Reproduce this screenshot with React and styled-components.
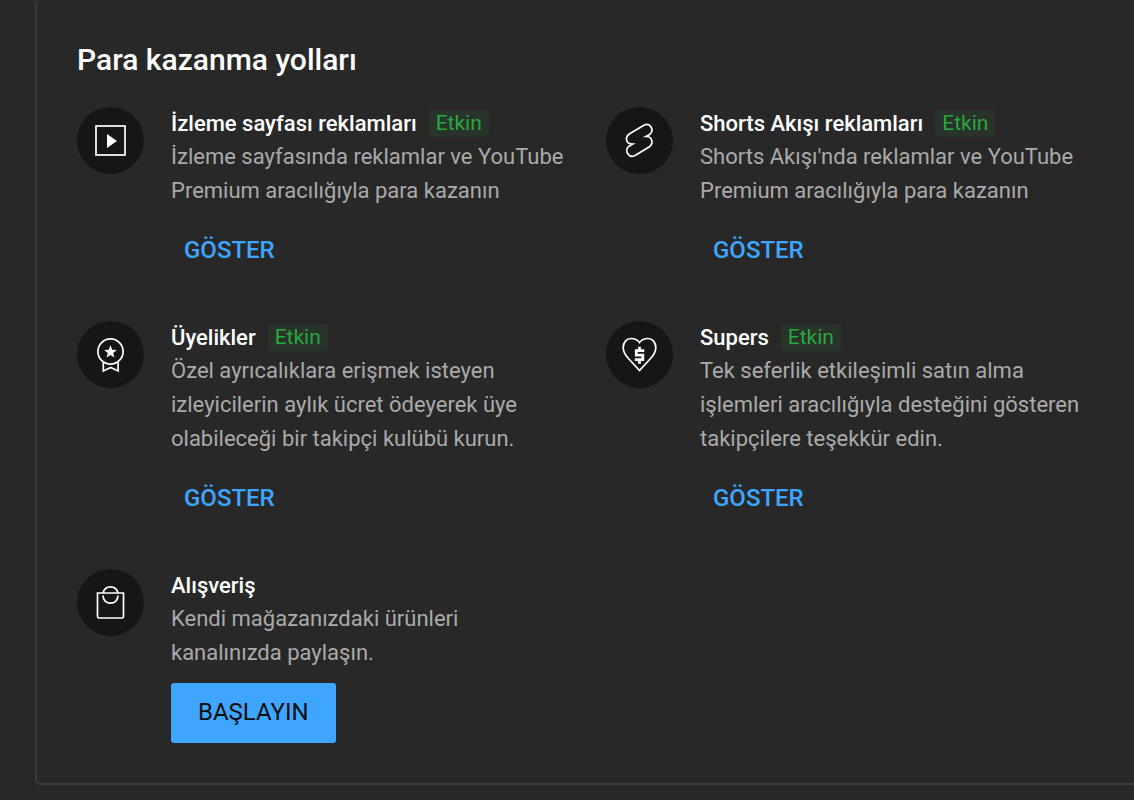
import React from "react";
import styled, { createGlobalStyle } from "styled-components";

const GlobalStyle = createGlobalStyle`
  body {
    margin: 0;
    background-color: #282828;
    font-family: Roboto, "Liberation Sans", sans-serif;
    color: #fff;
  }
`;

const StyledPage = styled.main`
  padding: 0 0 15px 35px;
`;

const StyledPanel = styled.section`
  border: 2px solid #3b3b3b;
  border-top: none;
  border-right: none;
  border-radius: 6px 0 0 6px;
  padding: 40px 39px 40px 40px;
`;

const StyledHeading = styled.h2`
  margin: 0 0 27px;
  font-size: 30px;
  line-height: 40px;
  font-weight: 500;
`;

const StyledGrid = styled.div`
  display: grid;
  grid-template-columns: 1fr 1fr;
  gap: 40px;
`;

const StyledItem = styled.article`
  display: flex;
  align-items: flex-start;
  gap: 27px;
`;

const StyledIconCircle = styled.div`
  flex: none;
  display: flex;
  width: 67px;
  height: 67px;
  border-radius: 50%;
  background-color: #161616;
`;

const StyledIcon = styled.svg`
  width: 100%;
  height: 100%;
  fill: none;
  stroke: #fff;
  stroke-width: 1.7;
`;

const StyledContent = styled.div`
  flex: 1;
  min-width: 0;
`;

const StyledTitleRow = styled.div`
  display: flex;
  align-items: center;
  gap: 12px;
  height: 33px;
`;

const StyledTitle = styled.h3`
  margin: 0;
  font-size: 22px;
  line-height: 33px;
  font-weight: 500;
`;

const StyledBadge = styled.span`
  padding: 0 7px;
  border-radius: 3px;
  background-color: #283329;
  color: #2ba640;
  font-size: 21px;
  line-height: 27px;
`;

const StyledDescription = styled.p`
  margin: 0 0 13px;
  color: #aaa;
  font-size: 22px;
  line-height: 34px;
`;

const StyledButton = styled.button`
  height: 60px;
  padding: 0 ${(props) => (props.$filled ? "27px" : "13px")} 3px;
  border: none;
  border-radius: 3px;
  background-color: ${(props) => (props.$filled ? "#3ea6ff" : "transparent")};
  color: ${(props) => (props.$filled ? "#0d0d0d" : "#3ea6ff")};
  font-family: inherit;
  font-size: 24px;
  font-weight: ${(props) => (props.$filled ? 400 : 500)};
  cursor: pointer;
`;

const icons = {
  watch: (
    <>
      <rect x="19" y="19" width="29" height="29" />
      <path d="M30 27v14l10-7z" fill="#fff" stroke="none" />
    </>
  ),
  shorts: (
    <path d="M24 26.500L37.500 18.500C44 15 49 23 43.500 27.500L40 29.500C47 29.500 47.500 37 43 40L29.500 48.300C23 51.800 17.500 43.500 23 39.200L26.700 37C19.500 37 18.500 30 24 26.500z" />
  ),
  member: (
    <>
      <circle cx="33.500" cy="30.500" r="12.600" />
      <path d="M26.300 41v9l7.400-3.500 7.400 3.500v-9" />
      <path
        d="M33.500 24.300l1.700 4.400 4.600.3-3.600 2.900 1.200 4.500-3.900-2.500-3.900 2.500 1.200-4.500-3.600-2.900 4.600-.3z"
        fill="#fff"
        stroke="none"
      />
    </>
  ),
  supers: (
    <>
      <path d="M33.500 49.500L22 37c-3-3.300-4.800-6.500-4.800-10.500 0-5 3.300-9 7.800-9 3.500 0 6.500 1.300 8.500 4 2-2.700 5-4 8.500-4 4.500 0 7.800 4 7.800 9 0 4-1.800 7.200-4.800 10.500z" />
      <path
        d="M38.300 29.700h-8v4.500h6.500v4.500h-8M33.500 25.700v4M33.500 38.700v4"
        strokeWidth="2.8"
      />
    </>
  ),
  shopping: (
    <>
      <path d="M20.500 24h26v23.500q0 1.500-1.500 1.500H22q-1.500 0-1.500-1.500z" />
      <path d="M26 24c1-4 3.700-6.200 7.500-6.200s6.500 2.200 7.500 6.200M26 26.500c0 4.500 3.200 7.700 7.500 7.700s7.500-3.200 7.500-7.700" />
    </>
  ),
};

const features = [
  {
    icon: "watch",
    title: "İzleme sayfası reklamları",
    active: true,
    text: "İzleme sayfasında reklamlar ve YouTube Premium aracılığıyla para kazanın",
  },
  {
    icon: "shorts",
    title: "Shorts Akışı reklamları",
    active: true,
    text: "Shorts Akışı'nda reklamlar ve YouTube Premium aracılığıyla para kazanın",
  },
  {
    icon: "member",
    title: "Üyelikler",
    active: true,
    text: "Özel ayrıcalıklara erişmek isteyen izleyicilerin aylık ücret ödeyerek üye olabileceği bir takipçi kulübü kurun.",
  },
  {
    icon: "supers",
    title: "Supers",
    active: true,
    text: "Tek seferlik etkileşimli satın alma işlemleri aracılığıyla desteğini gösteren takipçilere teşekkür edin.",
  },
  {
    icon: "shopping",
    title: "Alışveriş",
    active: false,
    text: "Kendi mağazanızdaki ürünleri kanalınızda paylaşın.",
  },
];

const Feature = ({ icon, title, active, text }) => (
  <StyledItem>
    <StyledIconCircle>
      <StyledIcon viewBox="0 0 67 67" aria-hidden="true">
        {icons[icon]}
      </StyledIcon>
    </StyledIconCircle>
    <StyledContent>
      <StyledTitleRow>
        <StyledTitle>{title}</StyledTitle>
        {active ? <StyledBadge>Etkin</StyledBadge> : null}
      </StyledTitleRow>
      <StyledDescription>{text}</StyledDescription>
      <StyledButton type="button" $filled={!active}>
        {active ? "GÖSTER" : "BAŞLAYIN"}
      </StyledButton>
    </StyledContent>
  </StyledItem>
);

const App = () => (
  <>
    <GlobalStyle />
    <StyledPage lang="tr">
      <StyledPanel>
        <StyledHeading>Para kazanma yolları</StyledHeading>
        <StyledGrid>
          {features.map((feature) => (
            <Feature key={feature.title} {...feature} />
          ))}
        </StyledGrid>
      </StyledPanel>
    </StyledPage>
  </>
);

export default App;
